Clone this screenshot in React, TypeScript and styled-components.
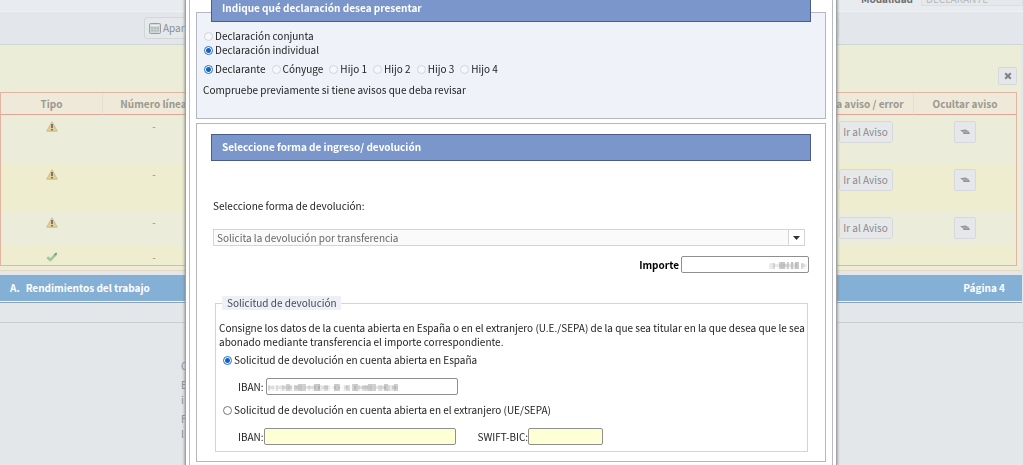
import React from "react";
import styled, { createGlobalStyle } from "styled-components";

const GlobalStyle = createGlobalStyle`
  *, *::before, *::after { box-sizing: border-box; }
  html, body { margin: 0; }
  body, button, input, select, legend {
    font-family: "Noto Sans CJK SC", "Open Sans", sans-serif;
    font-size: 10px;
    line-height: 14px;
  }
  body { background: #e4e7e9; color: #222; }
`;

const Page = styled.div`
  min-height: 100vh;
  border-right: 1px solid #d5d8dc;
  color: #8b8c8c;
`;

const TopStrip = styled.header`
  display: flex;
  justify-content: flex-end;
  align-items: flex-end;
  height: 12px;
  padding-bottom: 5px;
  overflow: hidden;
  background: #e9ecee;
  border-bottom: 1px solid #eff1f2;
`;

const ModeLabel = styled.label`
  display: flex;
  align-items: center;
  gap: 8px;
  color: #6c6e70;
  font-weight: bold;
`;

const ModeSelect = styled.select`
  appearance: none;
  width: 102px;
  height: 14px;
  padding: 0 4px;
  border: 1px solid #dcdfe1;
  border-top: 0;
  background: #e6e9eb;
  color: #b5b8ba;
`;

const Toolbar = styled.nav`
  display: flex;
  height: 33px;
  padding: 5px 18% 5px 144px;
  background: #e3e6ea;
  border-bottom: 1px solid #cfd3d2;
`;

const ToolButton = styled.button`
  display: flex;
  flex: 1;
  align-items: center;
  gap: 2px;
  padding: 0 4px;
  border: 1px solid #d3d6d9;
  border-radius: 3px;
  background: #e6e9ec;
  color: #8b8e91;
`;

const Notices = styled.section`
  margin-right: 2px;
  padding: 0 4px 4px 0;
  border-bottom: 1px solid #e6d6bd;
  background: #ecedd8;
`;

const NoticesHead = styled.div`
  display: flex;
  justify-content: flex-end;
  height: 47px;
  padding-top: 22px;
`;

const IconButton = styled.button<{ $wide?: boolean }>`
  display: inline-flex;
  align-items: center;
  justify-content: center;
  width: ${(p) => (p.$wide ? 22 : 19)}px;
  height: ${(p) => (p.$wide ? 22 : 18)}px;
  padding: 0;
  border: 1px solid #d6d8dc;
  border-radius: 2px;
  background: #e5e7ea;
`;

const GoButton = styled.button`
  width: 54px;
  height: 22px;
  padding: 0;
  border: 1px solid #d6d8dc;
  border-radius: 3px;
  background: #e6e8ea;
  color: #898b8e;
  white-space: nowrap;
`;

const NoticeTable = styled.table`
  width: 100%;
  table-layout: fixed;
  border-collapse: separate;
  border-spacing: 0;
  border: 1px solid #e2b5a3;
`;

const HeadCell = styled.th<{ $w?: number }>`
  width: ${(p) => (p.$w ? `${p.$w}px` : "auto")};
  height: 22px;
  padding: 0;
  border-right: 1px solid #e5dfd0;
  border-bottom: 1px solid #dfa594;
  background: #eee9d8;
  color: #9a9891;
  font-weight: bold;
  white-space: nowrap;
  &:last-child { border-right: 0; }
`;

const NoticeRow = styled.tr<{ $h: number; $alt?: boolean }>`
  height: ${(p) => p.$h}px;
  background: ${(p) => (p.$alt ? "#eeedd0" : "#ebecd9")};
`;

const Cell = styled.td`
  padding: 6px 0 0;
  text-align: center;
  vertical-align: top;
  line-height: 10px;
  svg { vertical-align: top; }
`;

const PageBar = styled.h2`
  display: flex;
  justify-content: space-between;
  margin: 4px 1px 1px 0;
  padding: 6px 17px 6px 10px;
  background: #83b0d4;
  color: #fff;
  font-size: 10px;
  line-height: 14px;
  box-shadow: 0 1px 0 #f2f5f7, 0 2px 0 #8fa3b5;
`;

const PageBarName = styled.span`
  display: flex;
  gap: 6px;
`;

const PageBody = styled.div`
  margin-top: 21px;
  padding: 35px 0 0 181px;
  border-top: 1px solid #cbced0;
`;

const BodyLine = styled.p<{ $gap?: boolean }>`
  margin: 0;
  padding-top: ${(p) => (p.$gap ? 4 : 0)}px;
  color: #8b8e90;
  line-height: 15px;
`;

const Overlay = styled.div`
  position: fixed;
  inset: 0;
  display: flex;
  justify-content: center;
  overflow: hidden;
  padding-right: 2px;
`;

const Dialog = styled.div`
  width: 650px;
  max-width: 100%;
  min-height: 100%;
  padding: 0 3px;
  background: #fff;
  box-shadow: 0 0 0 1px #a0a2a6, 0 0 3px 1px #777;
`;

const DialogBody = styled.form`
  min-height: 100%;
  padding: 12px 6px 4px;
  border: solid #b9bbc2;
  border-width: 0 1px;
`;

const Panel = styled.section<{ $tinted?: boolean }>`
  display: flow-root;
  margin-bottom: 4px;
  padding: 0 14px 9px;
  border: 1px solid #b4b7bf;
  background: ${(p) => (p.$tinted ? "#eff2f9" : "#fff")};
`;

const PanelTitle = styled.h3<{ $over?: boolean }>`
  margin: ${(p) => (p.$over ? "-18px" : "10px")} 0 0;
  padding: 4px 10px 6px;
  border: 1px solid #4b5c8c;
  background: #7b96ca;
  color: #fff;
  font-size: 10px;
  line-height: 15px;
`;

const Choices = styled.div`
  display: flex;
  flex-direction: column;
  margin: 7px -7px 5px;
`;

const ChoiceRow = styled.div`
  display: flex;
  gap: 6px;
  margin: 0 -7px;
`;

const Choice = styled.label`
  display: flex;
  align-items: center;
  gap: 2px;
  white-space: nowrap;
`;

const Radio = styled.input.attrs({ type: "radio" })`
  appearance: none;
  flex: none;
  width: 9px;
  height: 9px;
  margin: 0;
  border: 1px solid #777;
  border-radius: 50%;
  background: #fff;
  &:checked {
    border-color: #1b6fd0;
    background: radial-gradient(circle, #1560c4 0 2px, #fff 3px);
  }
  &:disabled { border-color: #d3d5da; background: #f6f7fa; }
`;

const Hint = styled.p`
  margin: 7px -8px 12px;
`;

const FormLabel = styled.label`
  display: block;
  margin: 38px 2px 16px;
`;

const SelectBox = styled.div`
  display: grid;
  margin: 0 6px 10px 2px;
`;

const Select = styled.select`
  grid-area: 1 / 1;
  appearance: none;
  width: 100%;
  height: 17px;
  padding: 0 3px;
  border: 1px solid #d5d5d5;
  border-radius: 0;
  background: #fafafa;
  color: #666;
`;

const SelectArrow = styled.span`
  grid-area: 1 / 1;
  display: flex;
  align-items: center;
  justify-content: center;
  justify-self: end;
  width: 17px;
  border: 1px solid #d5d5d5;
  background: #fff;
  pointer-events: none;
`;

const AmountRow = styled.div`
  display: flex;
  align-items: center;
  justify-content: flex-end;
  gap: 2px;
  margin-right: 2px;
  color: #000;
  font-weight: bold;
`;

const Field = styled.span<{ $w: number }>`
  display: grid;
  align-items: center;
  width: ${(p) => p.$w}px;
  svg { grid-area: 1 / 1; margin: 0 2px; pointer-events: none; }
`;

const TextInput = styled.input<{ $warm?: boolean }>`
  grid-area: 1 / 1;
  width: 100%;
  height: 17px;
  padding: 0 3px;
  border: 1px solid #8f8f8f;
  border-radius: 2px;
  background: ${(p) => (p.$warm ? "#ffffd6" : "#fff")};
`;

const Refund = styled.fieldset`
  min-width: 0;
  margin: 23px 3px 0 4px;
  padding: 11px 0 6px 6px;
  border: 1px solid #d4d4d6;
`;

const RefundLegend = styled.legend`
  padding: 0 4px 0 5px;
  background: #eef0f8;
  color: #444a55;
`;

const Explain = styled.p`
  margin: 0 0 4px -3px;
`;

const AccountChoice = styled(Choice)`
  padding-left: 1px;
`;

const AccountRow = styled.div`
  display: flex;
  align-items: center;
  gap: 22px;
  margin: 11px 0 8px;
  padding-left: 16px;
  &:last-child { margin-bottom: 0; }
`;

const AccountLabel = styled.label<{ $gap?: number }>`
  display: flex;
  align-items: center;
  gap: ${(p) => p.$gap ?? 0}px;
`;

const Warning = () => (
  <svg width="12" height="11" viewBox="0 0 12 11" role="img" aria-label="Aviso">
    <path d="M6 .8 11.4 10.2H.6Z" fill="#e2cf98" stroke="#c9b68c" strokeWidth=".8" strokeLinejoin="round" />
    <path d="M6 3v4M6 8v1.4" stroke="#625b50" strokeWidth="1.5" />
  </svg>
);

const Check = () => (
  <svg width="12" height="10" viewBox="0 0 12 10" role="img" aria-label="Correcto">
    <path d="M1.3 5.3 4.3 8 10.6 1.6" fill="none" stroke="#9cc79f" strokeWidth="2.5" />
    <path d="M8.2 3.2 10.7 1.2" stroke="#7a9b80" strokeWidth="1.5" />
  </svg>
);

const Hide = () => (
  <svg width="12" height="8" viewBox="0 0 12 8" aria-hidden="true">
    <path d="M1 2.2 6.5 1.6 9.6 3.2 11 6H4.5L4 4.2Z" fill="#929497" />
    <path d="m4 3.5 5 .7" stroke="#c9cbce" strokeWidth=".6" />
  </svg>
);

const Close = () => (
  <svg width="8" height="8" viewBox="0 0 8 8" aria-hidden="true">
    <path d="m1.2 1.2 5.6 5.6M6.8 1.2 1.2 6.8" stroke="#818487" strokeWidth="2.1" />
  </svg>
);

const Grid = () => (
  <svg width="12" height="11" viewBox="0 0 12 11" aria-hidden="true">
    <rect x=".5" y=".5" width="11" height="10" rx="1" fill="#d3d9d7" stroke="#989da0" />
    <path d="M2 2.5h8" stroke="#eef1f1" />
    <path d="M2 4h8v4.500H2z" fill="#b4bdb9" />
    <path d="M2 6.300h8M4.600 4v4.500M7.400 4v4.500" stroke="#d5dbd8" strokeWidth=".6" />
  </svg>
);

const Redacted = ({ tones, align }: { tones: string; align?: "end" }) => (
  <svg
    width={tones.length * 2}
    height="8"
    viewBox={`0 0 ${tones.length * 2} 8`}
    style={align ? { justifySelf: align } : undefined}
    aria-hidden="true"
  >
    {tones.split("").map((t, i) => {
      const n = Number(t);
      const top = n > 5 ? 1 : 2;
      return (
        <g key={i} fill="#55555a">
          <rect x={i * 2} y={top} width="2" height={8 - top} opacity={n * 0.045} />
          <rect x={i * 2} y="3" width="2" height="3" opacity={((n * 3 + i) % 5) * 0.04} />
        </g>
      );
    })}
  </svg>
);

const rows = [
  { h: 48, ok: false },
  { h: 48, ok: false },
  { h: 35, ok: false },
  { h: 19, ok: true },
];

const people = ["Declarante", "Cónyuge", "Hijo 1", "Hijo 2", "Hijo 3", "Hijo 4"];

export default function App() {
  return (
    <>
      <GlobalStyle />
      <Page>
        <TopStrip>
          <ModeLabel>
            Modalidad
            <ModeSelect defaultValue="d">
              <option value="d">DECLARANTE</option>
            </ModeSelect>
          </ModeLabel>
        </TopStrip>
        <Toolbar>
          <ToolButton type="button"><Grid />Apartados</ToolButton>
        </Toolbar>
        <Notices>
          <NoticesHead>
            <IconButton type="button" aria-label="Cerrar"><Close /></IconButton>
          </NoticesHead>
          <NoticeTable>
            <thead>
              <tr>
                <HeadCell $w={102}>Tipo</HeadCell>
                <HeadCell $w={102}>Número línea</HeadCell>
                <HeadCell />
                <HeadCell $w={97}>Ir a aviso / error</HeadCell>
                <HeadCell $w={102}>Ocultar aviso</HeadCell>
              </tr>
            </thead>
            <tbody>
              {rows.map((r, i) => (
                <NoticeRow key={i} $h={r.h} $alt={i % 2 === 1}>
                  <Cell>{r.ok ? <Check /> : <Warning />}</Cell>
                  <Cell>-</Cell>
                  <Cell />
                  <Cell>{!r.ok && <GoButton type="button">Ir al Aviso</GoButton>}</Cell>
                  <Cell>
                    {!r.ok && <IconButton type="button" $wide aria-label="Ocultar aviso"><Hide /></IconButton>}
                  </Cell>
                </NoticeRow>
              ))}
            </tbody>
          </NoticeTable>
        </Notices>
        <PageBar>
          <PageBarName><span>A.</span><span>Rendimientos del trabajo</span></PageBarName>
          <span>Página 4</span>
        </PageBar>
        <PageBody>
          <BodyLine>C</BodyLine>
          <BodyLine $gap>E</BodyLine>
          <BodyLine>i</BodyLine>
          <BodyLine $gap>F</BodyLine>
          <BodyLine>I</BodyLine>
        </PageBody>
      </Page>

      <Overlay>
        <Dialog role="dialog" aria-label="Presentar declaración">
          <DialogBody>
            <Panel $tinted>
              <PanelTitle $over>Indique qué declaración desea presentar</PanelTitle>
              <Choices>
                <Choice><Radio name="kind" disabled />Declaración conjunta</Choice>
                <Choice><Radio name="kind" defaultChecked />Declaración individual</Choice>
              </Choices>
              <ChoiceRow>
                {people.map((p, i) => (
                  <Choice key={p}>
                    <Radio name="person" defaultChecked={i === 0} disabled={i > 0} />{p}
                  </Choice>
                ))}
              </ChoiceRow>
              <Hint>Compruebe previamente si tiene avisos que deba revisar</Hint>
            </Panel>

            <Panel>
              <PanelTitle>Seleccione forma de ingreso/ devolución</PanelTitle>
              <FormLabel htmlFor="method">Seleccione forma de devolución:</FormLabel>
              <SelectBox>
                <Select id="method" defaultValue="t">
                  <option value="t">Solicita la devolución por transferencia</option>
                </Select>
                <SelectArrow>
                  <svg width="7" height="4" viewBox="0 0 7 4" aria-hidden="true">
                    <path d="M0 0h7L3.5 4Z" fill="#333" />
                  </svg>
                </SelectArrow>
              </SelectBox>
              <AmountRow>
                <label htmlFor="amount">Importe</label>
                <Field $w={128}>
                  <TextInput id="amount" />
                  <Redacted tones="2350168726183870521" align="end" />
                </Field>
              </AmountRow>
              <Refund>
                <RefundLegend>Solicitud de devolución</RefundLegend>
                <Explain>
                  Consigne los datos de la cuenta abierta en España o en el extranjero (U.E./SEPA) de la que sea
                  titular en la que desea que le sea abonado mediante transferencia el importe correspondiente.
                </Explain>
                <AccountChoice>
                  <Radio name="account" defaultChecked />Solicitud de devolución en cuenta abierta en España
                </AccountChoice>
                <AccountRow>
                  <AccountLabel $gap={2}>
                    IBAN:
                    <Field $w={192}>
                      <TextInput />
                      <Redacted tones="41214124266415577660312778325520077601355067731455776604427753476" />
                    </Field>
                  </AccountLabel>
                </AccountRow>
                <AccountChoice>
                  <Radio name="account" />Solicitud de devolución en cuenta abierta en el extranjero (UE/SEPA)
                </AccountChoice>
                <AccountRow>
                  <AccountLabel>
                    IBAN:
                    <Field $w={192}><TextInput $warm /></Field>
                  </AccountLabel>
                  <AccountLabel>
                    SWIFT-BIC:
                    <Field $w={75}><TextInput $warm /></Field>
                  </AccountLabel>
                </AccountRow>
              </Refund>
            </Panel>
          </DialogBody>
        </Dialog>
      </Overlay>
    </>
  );
}
